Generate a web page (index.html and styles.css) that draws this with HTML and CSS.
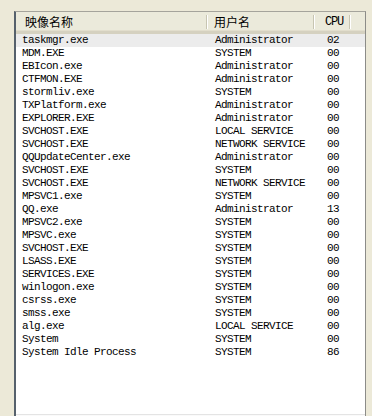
FILE: index.html
```html
<!DOCTYPE html>
<html lang="zh-CN">
<head>
    <meta charset="UTF-8" />
    <meta name="viewport" content="width=device-width, initial-scale=1.0" />
    <title>进程</title>
    <link rel="stylesheet" href="styles.css">
</head>
<body>

    <div class="panel">
        <div class="listview">
            <div class="lv-header">
                <div class="hcell col-name">映像名称</div>
                <div class="sep"></div>
                <div class="hcell col-user">用户名</div>
                <div class="sep"></div>
                <div class="hcell col-cpu mono">CPU</div>
                <div class="sep"></div>
            </div>

            <div class="lv-body">
                <div class="row selected"><span class="c-name">taskmgr.exe</span><span class="c-user">Administrator</span><span class="c-cpu">02</span></div>
                <div class="row"><span class="c-name">MDM.EXE</span><span class="c-user">SYSTEM</span><span class="c-cpu">00</span></div>
                <div class="row"><span class="c-name">EBIcon.exe</span><span class="c-user">Administrator</span><span class="c-cpu">00</span></div>
                <div class="row"><span class="c-name">CTFMON.EXE</span><span class="c-user">Administrator</span><span class="c-cpu">00</span></div>
                <div class="row"><span class="c-name">stormliv.exe</span><span class="c-user">SYSTEM</span><span class="c-cpu">00</span></div>
                <div class="row"><span class="c-name">TXPlatform.exe</span><span class="c-user">Administrator</span><span class="c-cpu">00</span></div>
                <div class="row"><span class="c-name">EXPLORER.EXE</span><span class="c-user">Administrator</span><span class="c-cpu">00</span></div>
                <div class="row"><span class="c-name">SVCHOST.EXE</span><span class="c-user">LOCAL SERVICE</span><span class="c-cpu">00</span></div>
                <div class="row"><span class="c-name">SVCHOST.EXE</span><span class="c-user">NETWORK SERVICE</span><span class="c-cpu">00</span></div>
                <div class="row"><span class="c-name">QQUpdateCenter.exe</span><span class="c-user">Administrator</span><span class="c-cpu">00</span></div>
                <div class="row"><span class="c-name">SVCHOST.EXE</span><span class="c-user">SYSTEM</span><span class="c-cpu">00</span></div>
                <div class="row"><span class="c-name">SVCHOST.EXE</span><span class="c-user">NETWORK SERVICE</span><span class="c-cpu">00</span></div>
                <div class="row"><span class="c-name">MPSVC1.exe</span><span class="c-user">SYSTEM</span><span class="c-cpu">00</span></div>
                <div class="row"><span class="c-name">QQ.exe</span><span class="c-user">Administrator</span><span class="c-cpu">13</span></div>
                <div class="row"><span class="c-name">MPSVC2.exe</span><span class="c-user">SYSTEM</span><span class="c-cpu">00</span></div>
                <div class="row"><span class="c-name">MPSVC.exe</span><span class="c-user">SYSTEM</span><span class="c-cpu">00</span></div>
                <div class="row"><span class="c-name">SVCHOST.EXE</span><span class="c-user">SYSTEM</span><span class="c-cpu">00</span></div>
                <div class="row"><span class="c-name">LSASS.EXE</span><span class="c-user">SYSTEM</span><span class="c-cpu">00</span></div>
                <div class="row"><span class="c-name">SERVICES.EXE</span><span class="c-user">SYSTEM</span><span class="c-cpu">00</span></div>
                <div class="row"><span class="c-name">winlogon.exe</span><span class="c-user">SYSTEM</span><span class="c-cpu">00</span></div>
                <div class="row"><span class="c-name">csrss.exe</span><span class="c-user">SYSTEM</span><span class="c-cpu">00</span></div>
                <div class="row"><span class="c-name">smss.exe</span><span class="c-user">SYSTEM</span><span class="c-cpu">00</span></div>
                <div class="row"><span class="c-name">alg.exe</span><span class="c-user">LOCAL SERVICE</span><span class="c-cpu">00</span></div>
                <div class="row"><span class="c-name">System</span><span class="c-user">SYSTEM</span><span class="c-cpu">00</span></div>
                <div class="row"><span class="c-name">System Idle Process</span><span class="c-user">SYSTEM</span><span class="c-cpu">86</span></div>
            </div>

            <div class="spacer"></div>
            <div class="hscroll"></div>
        </div>
    </div>

</body>
</html>
```

FILE: styles.css
```css
* {
    box-sizing: border-box;
}

html, body {
    height: 100%;
    overflow: hidden;
}

body {
    margin: 0;
    background-color: #ece9d8;
    font-family: "Liberation Mono", "Noto Sans CJK SC", monospace;
    color: #000;
}

.panel {
    padding: 11px 6px 0 14px;
}

.listview {
    display: flex;
    flex-direction: column;
    height: 412px;
    background-color: #fff;
    border-top: 1px solid #a5a49c;
    border-right: 1px solid #8c8c88;
    border-left: 2px solid #56616c;
}

/* header */
.lv-header {
    display: flex;
    align-items: center;
    height: 22px;
    background-color: #ebeadb;
    border-bottom: 3px solid #d5d1c0;
    box-shadow: inset 0 -1px 0 #e2decd;
}

.hcell {
    height: 18px;
    line-height: 18px;
    font-family: "Noto Sans CJK SC", sans-serif;
    font-size: 12px;
}

.hcell.mono {
    font-family: "Liberation Mono", monospace;
    font-size: 12px;
    letter-spacing: -1.2px;
}

.col-name {
    width: 190px;
    padding-left: 9px;
}

.col-user {
    width: 105px;
    padding-left: 6px;
}

.col-cpu {
    width: 34px;
    padding-left: 10px;
}

.sep {
    width: 2px;
    height: 14px;
    border-left: 1px solid #c7c5b2;
    border-right: 1px solid #fff;
}

/* rows */
.lv-body {
    display: flex;
    flex-direction: column;
}

.row {
    display: flex;
    height: 13px;
    line-height: 13px;
    font-size: 11px;
    letter-spacing: -0.6px;
    white-space: nowrap;
}

.row.selected {
    background-color: #ececec;
}

.c-name {
    width: 192px;
    padding-left: 6px;
}

.c-user {
    width: 107px;
    padding-left: 7px;
}

.c-cpu {
    width: 36px;
    padding-left: 12px;
}

.spacer {
    flex: 1;
}

.hscroll {
    height: 9px;
    border-top: 1px solid #e4e4e4;
    background-color: #fafafa;
}
```
